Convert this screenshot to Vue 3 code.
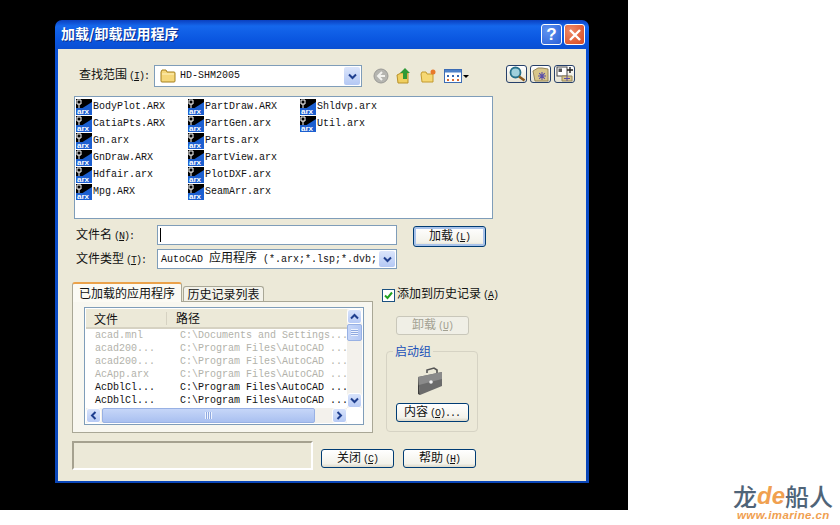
<template>
  <div class="screen">
    <div class="backdrop">
      <div class="dialog">
        <div class="titlebar">
          <span class="title cn">加载/卸载应用程序</span>
          <div class="title-btn help">?</div>
          <div class="title-btn close">
            <svg width="14" height="14" viewBox="0 0 14 14"><path d="M2 2l10 10M12 2L2 12" stroke="#fff" stroke-width="2.4" /></svg>
          </div>
        </div>
        <div class="client">
          <div class="look-row">
            <span class="label look-label"><span class="cn">查找范围</span><span class="key">(<u>I</u>):</span></span>
            <div class="combo look-combo">
              <svg class="folder" width="16" height="14" viewBox="0 0 16 14"><path d="M1 3l1-2h4l1 2h7a1 1 0 0 1 1 1v8a1 1 0 0 1-1 1H2a1 1 0 0 1-1-1z" fill="#f5d77a" stroke="#a5801f" /><path d="M2 5h12" stroke="#fff2bf" /></svg>
              <span class="combo-text">HD-SHM2005</span>
              <span class="drop"><svg width="9" height="7" viewBox="0 0 9 7"><path d="M1 1.5l3.5 3.5L8 1.5" fill="none" stroke="#1f3f8f" stroke-width="2" /></svg></span>
            </div>
            <div class="toolbar">
              <svg width="16" height="16" viewBox="0 0 16 16"><circle cx="8" cy="8" r="7" fill="#b5b5b0" stroke="#9a9a96" /><path d="M9 4L5 8l4 4M5 8h7" fill="none" stroke="#f2f2ee" stroke-width="2" /></svg>
              <svg width="17" height="18" viewBox="0 0 17 18"><path d="M1 8l4-2h7v10H2z" fill="#f0cf5f" stroke="#b8922b" /><path d="M9 1l5 5h-3v6H7V6H4z" fill="#2f9a36" /></svg>
              <svg width="17" height="16" viewBox="0 0 17 16"><path d="M1 6l1-2h4l1 2h6v8H2z" fill="#f6d874" stroke="#c39a2e" /><circle cx="13" cy="4" r="2.5" fill="#e8792a" /></svg>
              <div class="views">
                <svg width="18" height="14" viewBox="0 0 18 14"><rect x=".5" y=".5" width="17" height="13" fill="#fff" stroke="#3c6cb4" /><rect x="1" y="1" width="16" height="2.5" fill="#4d82c9" /><path d="M3 6h2v2H3zM8 6h2v2H8zM13 6h2v2h-2z" fill="#3468b0" /><path d="M3 10h2v2H3zM8 10h2v2H8zM13 10h2v2h-2z" fill="#d96b30" /></svg>
                <i class="caret"></i>
              </div>
            </div>
            <div class="tools-right">
              <button class="tool-btn"><svg width="18" height="16" viewBox="0 0 18 16"><circle cx="7.5" cy="6.5" r="5" fill="#9fd0dc" stroke="#26708a" stroke-width="1.8" /><path d="M11 10.5l5.5 4" stroke="#8a5a1e" stroke-width="2.6" /></svg></button>
              <button class="tool-btn"><svg width="18" height="15" viewBox="0 0 18 15"><path d="M1 4l5-3h4l6 1v12H3z" fill="#d8c68a" stroke="#97875a" /><path d="M10 5v8M6 9h8M7.2 6.2l5.6 5.6M12.8 6.2l-5.6 5.6" stroke="#5b4fa8" stroke-width="1.1" /></svg></button>
              <button class="tool-btn"><svg width="18" height="16" viewBox="0 0 18 16"><rect x="1" y="1" width="10" height="9" fill="#fff" stroke="#444" /><rect x="2.5" y="2.5" width="3.5" height="3.5" fill="#555" /><path d="M14 1v6M11 4h6" stroke="#222" stroke-width="1.4" /><path d="M6 10h10v5H6z" fill="#d8c68a" stroke="#97875a" /><path d="M11 9.5v5.5M8 12.5h6" stroke="#5b4fa8" /></svg></button>
            </div>
          </div>

          <div class="files">
            <div v-for="f in files" :key="f" class="file">
              <svg class="arx" width="16" height="16" viewBox="0 0 16 16">
                <rect width="16" height="16" fill="#000" />
                <path d="M5 10L16 3v13H5z" fill="#1c5fd0" />
                <path d="M1 1h4v4H1z" fill="none" stroke="#fff" />
                <path d="M3 5v4" stroke="#fff" />
                <rect y="9" width="16" height="7" fill="#1c5fd0" />
                <text x="1" y="15" class="arx-text">arx</text>
              </svg>
              <span>{{ f }}</span>
            </div>
          </div>

          <div class="field-row name-row">
            <span class="label field-label"><span class="cn">文件名</span><span class="key">(<u>N</u>):</span></span>
            <div class="input"><i class="cursor"></i></div>
            <button class="btn default load"><span class="cn">加载</span><span class="key">(<u>L</u>)</span></button>
          </div>
          <div class="field-row type-row">
            <span class="label field-label"><span class="cn">文件类型</span><span class="key">(<u>T</u>):</span></span>
            <div class="combo type-combo">
              <span class="combo-text">AutoCAD <span class="cn">应用程序</span> (*.arx;*.lsp;*.dvb;</span>
              <span class="drop"><svg width="9" height="7" viewBox="0 0 9 7"><path d="M1 1.5l3.5 3.5L8 1.5" fill="none" stroke="#1f3f8f" stroke-width="2" /></svg></span>
            </div>
          </div>

          <div class="lower">
            <div class="tabs-wrap">
              <div class="tabs">
                <div class="tab active cn">已加载的应用程序</div>
                <div class="tab cn">历史记录列表</div>
              </div>
              <div class="tab-panel">
                <div class="list">
                  <div class="list-main">
                    <div class="list-body">
                      <div class="list-head cn">
                        <span class="col-file">文件</span>
                        <span class="col-path">路径</span>
                      </div>
                      <div v-for="(r, i) in rows" :key="i" class="list-row" :class="{ dim: r.dim }">
                        <span class="col-file">{{ r.file }}</span>
                        <span class="col-path">{{ r.path }}</span>
                      </div>
                    </div>
                    <div class="vscroll">
                      <span class="sb-btn"><svg width="9" height="7" viewBox="0 0 9 7"><path d="M1 5.5L4.5 2 8 5.5" fill="none" stroke="#1f3f8f" stroke-width="2" /></svg></span>
                      <span class="v-thumb"><i class="grip-v"></i></span>
                      <span class="sb-btn bottom-btn"><svg width="9" height="7" viewBox="0 0 9 7"><path d="M1 1.5l3.5 3.5L8 1.5" fill="none" stroke="#1f3f8f" stroke-width="2" /></svg></span>
                    </div>
                  </div>
                  <div class="hscroll">
                    <span class="sb-btn"><svg width="7" height="9" viewBox="0 0 7 9"><path d="M5.5 1L2 4.5 5.5 8" fill="none" stroke="#1f3f8f" stroke-width="2" /></svg></span>
                    <span class="h-thumb"><i class="grip-h"></i></span>
                    <span class="sb-btn right-btn"><svg width="7" height="9" viewBox="0 0 7 9"><path d="M1.5 1L5 4.5 1.5 8" fill="none" stroke="#1f3f8f" stroke-width="2" /></svg></span>
                  </div>
                </div>
              </div>
            </div>

            <div class="side">
              <div class="check-row">
                <span class="check"><svg width="9" height="9" viewBox="0 0 9 9"><path d="M1 4.5L3.5 7 8 1.5" fill="none" stroke="#21a121" stroke-width="2" /></svg></span>
                <span class="label"><span class="cn">添加到历史记录</span><span class="key">(<u>A</u>)</span></span>
              </div>
              <button class="btn disabled unload"><span class="cn">卸载</span><span class="key">(<u>U</u>)</span></button>
              <div class="group">
                <span class="legend cn">启动组</span>
                <svg class="case" width="30" height="30" viewBox="0 0 30 30">
                  <path d="M12 7V4l7-2 3 2v3" fill="none" stroke="#555" stroke-width="1.6" />
                  <path d="M3 11l24-5v14L5 29z" fill="#6b6b6b" />
                  <path d="M3 11l24-5v7L4 19z" fill="#8a8a8a" />
                  <path d="M3 11l2 18-2-1z" fill="#3c3c3c" />
                  <circle cx="16" cy="16" r="1.8" fill="#f0f0f0" />
                </svg>
                <button class="btn contents"><span class="cn">内容</span><span class="key">(<u>O</u>)...</span></button>
              </div>
            </div>
          </div>

          <div class="bottom">
            <div class="status"></div>
            <button class="btn close-btn"><span class="cn">关闭</span><span class="key">(<u>C</u>)</span></button>
            <button class="btn help-btn"><span class="cn">帮助</span><span class="key">(<u>H</u>)</span></button>
          </div>
        </div>
      </div>
    </div>
    <div class="logo">
      <div class="logo-main"><span class="cn">龙</span><em>de</em><span class="cn">船人</span></div>
      <div class="logo-url">www.imarine.cn</div>
    </div>
  </div>
</template>

<script setup>
const files = [
  'BodyPlot.ARX', 'CatiaPts.ARX', 'Gn.arx', 'GnDraw.ARX', 'Hdfair.arx', 'Mpg.ARX',
  'PartDraw.ARX', 'PartGen.arx', 'Parts.arx', 'PartView.arx', 'PlotDXF.arx', 'SeamArr.arx',
  'Shldvp.arx', 'Util.arx',
]

const rows = [
  { file: 'acad.mnl', path: 'C:\\Documents and Settings...', dim: true },
  { file: 'acad200...', path: 'C:\\Program Files\\AutoCAD ...', dim: true },
  { file: 'acad200...', path: 'C:\\Program Files\\AutoCAD ...', dim: true },
  { file: 'AcApp.arx', path: 'C:\\Program Files\\AutoCAD ...', dim: true },
  { file: 'AcDblCl...', path: 'C:\\Program Files\\AutoCAD ...', dim: false },
  { file: 'AcDblCl...', path: 'C:\\Program Files\\AutoCAD ...', dim: false },
]
</script>

<style>
html, body {
  margin: 0;
  background: #fff;
}
</style>

<style scoped>
.screen {
  width: 840px;
  height: 525px;
  display: flex;
  align-items: flex-start;
  position: relative;
  overflow: hidden;
  background: #fff;
  font-family: "Liberation Mono", "Noto Sans CJK SC", monospace;
  font-size: 10px;
  line-height: 14px;
  color: #111;
}
.cn {
  font-family: "Noto Sans CJK SC", sans-serif;
  font-size: 12px;
  line-height: 1;
}
.key {
  margin-left: 2px;
  letter-spacing: -1px;
}
.backdrop {
  width: 628px;
  height: 510px;
  background: #000;
  padding: 20px 0 0 55px;
  box-sizing: border-box;
}
.dialog {
  width: 534px;
  height: 463px;
  border-radius: 7px 7px 0 0;
  display: flex;
  flex-direction: column;
  padding: 0 3px 2px;
  box-sizing: border-box;
  background: linear-gradient(#0a3fbf 0, #1567ec 6px, #0a56e0 20px, #0a4fd2 29px, #0a46b8 100%);
}
.titlebar {
  height: 29px;
  flex: none;
  display: flex;
  align-items: center;
  gap: 2px;
  padding: 0 1px 0 3px;
}
.title {
  color: #fff;
  font-weight: 700;
  font-size: 14px;
  margin: -3px auto 0 0;
  text-shadow: 1px 1px #0a2f8f;
}
.title-btn {
  width: 21px;
  height: 21px;
  border: 1px solid #fff;
  border-radius: 3px;
  display: flex;
  align-items: center;
  justify-content: center;
  box-sizing: border-box;
  color: #fff;
  font: 700 17px "Liberation Sans", sans-serif;
}
.help {
  background: radial-gradient(circle at 30% 30%, #5f93f0, #2a5fd8);
}
.close {
  background: radial-gradient(circle at 30% 30%, #ee8a68, #d8481f);
}
.client {
  flex: 1;
  background: #ece9d8;
  min-height: 0;
}
.look-row {
  margin-top: 16px;
  padding: 0 11px 0 21px;
  display: flex;
  align-items: flex-start;
  height: 22px;
}
.label {
  white-space: nowrap;
}
.look-label {
  width: 75px;
  height: 22px;
  flex: none;
  line-height: 24px;
}
.combo {
  background: #fff;
  border: 1px solid #7f9db9;
  box-sizing: border-box;
  display: flex;
  align-items: center;
}
.look-combo {
  width: 208px;
  height: 22px;
  padding-left: 5px;
}
.folder {
  margin-right: 4px;
}
.combo-text {
  flex: 1;
  white-space: nowrap;
}
.drop {
  width: 16px;
  align-self: stretch;
  margin: 1px;
  background: linear-gradient(#dbe5fb, #b4c8f4);
  border-radius: 2px;
  display: flex;
  align-items: center;
  justify-content: center;
}
.toolbar {
  display: flex;
  align-items: center;
  gap: 7px;
  margin-left: 11px;
  height: 22px;
}
.views {
  display: flex;
  align-items: center;
  gap: 1px;
}
.caret {
  border: 3px solid transparent;
  border-top: 3px solid #000;
  border-bottom: 0;
}
.tools-right {
  margin-left: auto;
  display: flex;
  gap: 3px;
}
.tool-btn {
  width: 21px;
  height: 18px;
  padding: 0;
  border: 1px solid #26406a;
  border-radius: 3px;
  background: linear-gradient(#fff, #e6e3d3);
  display: flex;
  align-items: center;
  justify-content: center;
}
.files {
  margin: 9px 0 0 16px;
  width: 419px;
  height: 123px;
  box-sizing: border-box;
  border: 1px solid #7f9db9;
  background: #fff;
  padding: 1px;
  display: grid;
  grid-template-rows: repeat(6, 17px);
  grid-auto-flow: column;
  grid-auto-columns: 112px;
}
.file {
  display: flex;
  align-items: center;
  gap: 1px;
}
.arx {
  flex: none;
}
.arx-text {
  font: 700 8px "Liberation Sans", sans-serif;
  fill: #fff;
}
.field-row {
  display: flex;
  align-items: flex-start;
  height: 20px;
  padding-left: 18px;
}
.name-row {
  margin-top: 6px;
}
.type-row {
  margin-top: 4px;
}
.field-label {
  width: 81px;
  height: 20px;
  flex: none;
  line-height: 24px;
}
.input {
  width: 240px;
  height: 20px;
  box-sizing: border-box;
  border: 1px solid #7f9db9;
  background: #fff;
  padding: 2px;
}
.cursor {
  display: block;
  width: 1px;
  height: 14px;
  background: #000;
}
.btn {
  display: block;
  width: 73px;
  height: 19px;
  padding: 0;
  font: inherit;
  color: #111;
  border: 1px solid #003c74;
  border-radius: 3px;
  background: linear-gradient(#fff, #f3f2ea 80%, #dcd8c8);
  text-align: center;
  box-sizing: border-box;
  white-space: nowrap;
}
.load {
  height: 21px;
  margin: 1px 0 0 16px;
  box-shadow: inset 0 0 0 2px #a9c3ea;
}
.type-combo {
  width: 240px;
  height: 20px;
  padding-left: 3px;
}
.lower {
  display: flex;
  margin-top: 13px;
  padding-left: 14px;
  align-items: flex-start;
}
.tabs-wrap {
  width: 301px;
  flex: none;
}
.tabs {
  display: flex;
  align-items: flex-end;
  height: 20px;
  margin-bottom: -1px;
  position: relative;
  z-index: 1;
}
.tab {
  height: 15px;
  line-height: 14px;
  width: 81px;
  margin-bottom: 1px;
  text-align: center;
  box-sizing: border-box;
  border: 1px solid #a9a796;
  border-bottom: 0;
  border-radius: 3px 3px 0 0;
  background: #f3f2ea;
  margin-left: 1px;
}
.tab.active {
  width: 110px;
  height: 20px;
  line-height: 17px;
  margin: 0;
  background: #fbfaf4;
  border-color: #a9a796;
  border-top: 2px solid #eba24a;
}
.tab-panel {
  height: 132px;
  box-sizing: border-box;
  border: 1px solid #a9a796;
  background: #f8f7f0;
  padding: 5px 8px 7px 11px;
}
.list {
  width: 280px;
  height: 118px;
  box-sizing: border-box;
  border: 1px solid #7f9db9;
  background: #fff;
  padding: 1px;
}
.list-main {
  display: flex;
  height: 99px;
}
.list-body {
  flex: 1;
  overflow: hidden;
}
.list-head {
  height: 20px;
  background: #ece9d8;
  border-bottom: 2px solid #d6d2c2;
  display: flex;
  align-items: center;
  box-sizing: border-box;
}
.col-file {
  width: 85px;
  flex: none;
  padding-left: 9px;
  box-sizing: border-box;
  white-space: nowrap;
}
.list-head .col-file {
  width: 81px;
  padding-left: 8px;
  border-right: 1px solid #d6d2c2;
  height: 13px;
  line-height: 13px;
}
.col-path {
  white-space: pre;
  padding-left: 9px;
}
.list-row {
  height: 13px;
  line-height: 13px;
  display: flex;
}
.dim {
  color: #b2b2aa;
}
.vscroll {
  width: 15px;
  flex: none;
  background: #f3f1ec;
  display: flex;
  flex-direction: column;
}
.sb-btn {
  flex: none;
  width: 15px;
  height: 15px;
  background: linear-gradient(#d8e3fb, #b7caf5);
  border: 1px solid #fff;
  border-radius: 3px;
  box-sizing: border-box;
  display: flex;
  align-items: center;
  justify-content: center;
}
.bottom-btn {
  margin-top: auto;
}
.v-thumb {
  height: 17px;
  background: linear-gradient(90deg, #c6d6f8, #b4c8f4);
  border: 1px solid #98b1e4;
  border-radius: 2px;
  box-sizing: border-box;
  display: flex;
  align-items: center;
  justify-content: center;
}
.grip-v {
  width: 7px;
  height: 7px;
  background: repeating-linear-gradient(#eef3fe 0 1px, #8fa9e0 1px 2px);
}
.hscroll {
  height: 15px;
  width: 261px;
  display: flex;
  background: #f3f1ec;
  gap: 1px;
}
.h-thumb {
  width: 213px;
  background: linear-gradient(#c6d6f8, #a9c0f0);
  border: 1px solid #98b1e4;
  border-radius: 2px;
  box-sizing: border-box;
  display: flex;
  align-items: center;
  justify-content: center;
}
.grip-h {
  width: 7px;
  height: 7px;
  background: repeating-linear-gradient(90deg, #eef3fe 0 1px, #8fa9e0 1px 2px);
}
.right-btn {
  margin-left: auto;
}
.side {
  margin-left: 9px;
  flex: 1;
}
.check-row {
  display: flex;
  align-items: center;
  gap: 2px;
  margin-top: 6px;
  height: 14px;
}
.check {
  width: 13px;
  height: 13px;
  box-sizing: border-box;
  border: 1px solid #1c5180;
  background: #fff;
  display: flex;
  align-items: center;
  justify-content: center;
}
.unload {
  margin: 14px 0 0 14px;
}
.btn.disabled {
  color: #a3a192;
  border-color: #c9c7ba;
  background: #f0efe6;
}
.group {
  margin: 16px 0 0 4px;
  width: 92px;
  height: 81px;
  box-sizing: border-box;
  border: 1px solid #d6d3c4;
  border-radius: 4px;
  display: flex;
  flex-direction: column;
  align-items: center;
  position: relative;
}
.legend {
  position: absolute;
  left: 6px;
  top: -8px;
  padding: 0 2px;
  line-height: 14px;
  background: #ece9d8;
  color: #1a50b8;
}
.case {
  margin-top: 14px;
  margin-left: -4px;
}
.contents {
  margin-top: 7px;
}
.bottom {
  display: flex;
  align-items: flex-start;
  margin-top: 8px;
  padding-left: 14px;
}
.status {
  width: 241px;
  height: 29px;
  box-sizing: border-box;
  border: 2px solid;
  border-color: #a5a18f #fff #fff #a5a18f;
}
.close-btn {
  margin: 8px 0 0 8px;
}
.help-btn {
  margin: 8px 0 0 9px;
}
.logo {
  position: absolute;
  left: 733px;
  top: 483px;
  width: 102px;
}
.logo-main {
  height: 26px;
  line-height: 26px;
  display: flex;
  align-items: center;
  color: #4f6478;
}
.logo-main .cn {
  font-size: 24px;
  font-weight: 500;
}
.logo-main em {
  font: italic 700 24px "Liberation Sans", sans-serif;
  color: #f0a050;
}
.logo-url {
  font: italic 700 11.5px "Liberation Sans", sans-serif;
  line-height: 12px;
  margin-left: 4px;
  color: #f0a050;
  letter-spacing: .4px;
  white-space: nowrap;
}
</style>
